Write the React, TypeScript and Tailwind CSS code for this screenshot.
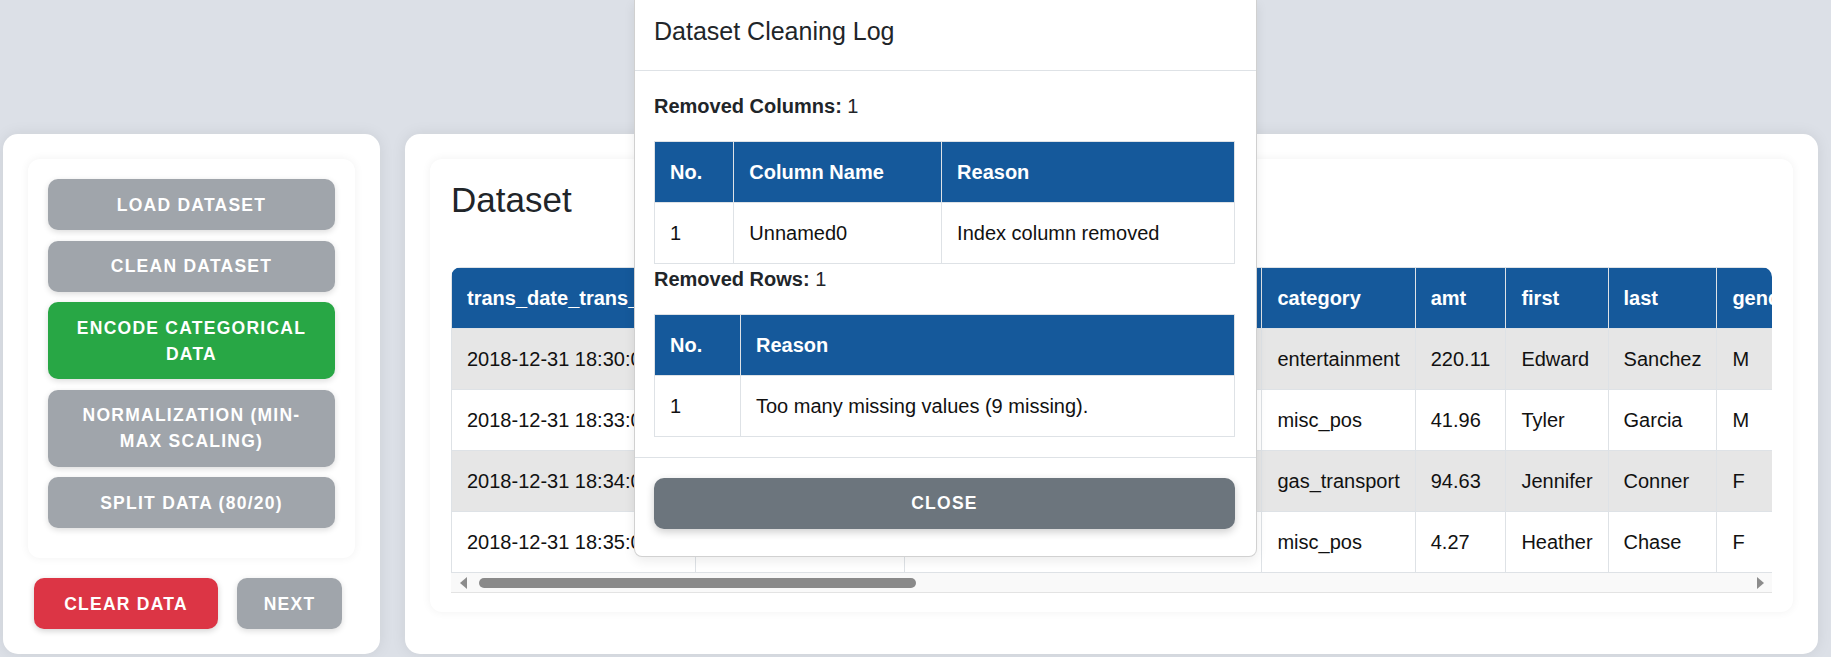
import React from "react";

const rows = [
  { t: "2018-12-31 18:30:00", cc: "3560725013359375", m: "fraud_Hamill-D'Amore", c: "entertainment", a: "220.11", f: "Edward", l: "Sanchez", g: "M", s: "594 White Dale Suite 530", ci: "Malad City" },
  { t: "2018-12-31 18:33:00", cc: "6011360759745864", m: "fraud_Kuhn LLC", c: "misc_pos", a: "41.96", f: "Tyler", l: "Garcia", g: "M", s: "408 Bradley Rest", ci: "Doe Hill" },
  { t: "2018-12-31 18:34:00", cc: "4060579726528237", m: "fraud_Kutch, Hermiston and Farrell", c: "gas_transport", a: "94.63", f: "Jennifer", l: "Conner", g: "F", s: "4016 Lewis Loaf", ci: "Bradley" },
  { t: "2018-12-31 18:35:00", cc: "4292743669224718", m: "fraud_Kris-Padberg", c: "misc_pos", a: "4.27", f: "Heather", l: "Chase", g: "F", s: "6888 Hicks Stream", ci: "Farmington" },
];

function SideButton({ children, bg }: { children: React.ReactNode; bg: string }) {
  return (
    <button
      className={
        "w-full rounded-[10px] px-[20px] py-[12.5px] text-center text-[17.5px] font-bold uppercase leading-[26px] tracking-[1.25px] text-white shadow-[0_2px_6px_rgba(0,0,0,0.14)] " +
        bg
      }
    >
      {children}
    </button>
  );
}

const th = "border border-[#dee2e6] px-[15px] py-[15px] text-left font-bold leading-[30px] text-white";
const td = "border border-[#dee2e6] px-[15px] py-[15px] leading-[30px]";

export default function App() {
  return (
    <div className="relative h-[657px] w-[1831px] overflow-hidden bg-[#dce0e7] font-['Liberation_Sans',Arial,sans-serif] text-[#212529]">
      <div className="flex items-stretch gap-[25px] pb-[3px] pl-[3px] pr-[13px] pt-[134px]">
        {/* Left panel */}
        <aside className="w-[377px] shrink-0 rounded-[15px] bg-white p-[25px] shadow-[0_0_15px_rgba(0,0,0,0.08)]">
          <div className="flex flex-col gap-[10.5px] rounded-[12px] bg-white px-[20px] pb-[30px] pt-[20px] shadow-[0_0_10px_rgba(0,0,0,0.06)]">
            <SideButton bg="bg-[#a0a5ab]">Load Dataset</SideButton>
            <SideButton bg="bg-[#a0a5ab]">Clean Dataset</SideButton>
            <SideButton bg="bg-[#28a745]">Encode Categorical Data</SideButton>
            <SideButton bg="bg-[#a0a5ab]">Normalization (Min-Max Scaling)</SideButton>
            <SideButton bg="bg-[#a0a5ab]">Split Data (80/20)</SideButton>
          </div>
          <div className="mt-[20px] flex gap-[19px] pl-[6px]">
            <button className="w-[184px] rounded-[10px] bg-[#dc3545] py-[12.5px] text-center text-[17.5px] font-bold uppercase leading-[26px] tracking-[1.25px] text-white shadow-[0_2px_6px_rgba(0,0,0,0.18)]">
              Clear Data
            </button>
            <button className="w-[105px] rounded-[10px] bg-[#a0a5ab] py-[12.5px] text-center text-[17.5px] font-bold uppercase leading-[26px] tracking-[1.25px] text-white shadow-[0_2px_6px_rgba(0,0,0,0.14)]">
              Next
            </button>
          </div>
        </aside>

        {/* Main panel */}
        <main className="min-w-0 flex-1 rounded-[15px] bg-white p-[25px] shadow-[0_0_15px_rgba(0,0,0,0.08)]">
          <div className="rounded-[12px] bg-white px-[21px] pb-[19px] pt-[20px] shadow-[0_0_10px_rgba(0,0,0,0.06)]">
            <h2 className="mb-[46px] text-[35px] font-normal leading-[42px] text-[#212529]">Dataset</h2>
            <div className="overflow-hidden rounded-t-[10px]">
              <div className="overflow-hidden">
                <table className="w-max border-collapse whitespace-nowrap text-[20px] text-[#111]">
                  <thead>
                    <tr className="bg-[#15599b]">
                      <th className={th}>trans_date_trans_time</th>
                      <th className={th}>cc_num</th>
                      <th className={th}>
                        <div className="min-w-[326px]">merchant</div>
                      </th>
                      <th className={th}>category</th>
                      <th className={th}>amt</th>
                      <th className={th}>first</th>
                      <th className={th}>last</th>
                      <th className={th}>gender</th>
                      <th className={th}>street</th>
                      <th className={th}>city</th>
                    </tr>
                  </thead>
                  <tbody>
                    {rows.map((r, i) => (
                      <tr key={i} className={i % 2 === 0 ? "bg-[#e6e6e6]" : "bg-white"}>
                        <td className={td}>{r.t}</td>
                        <td className={td}>{r.cc}</td>
                        <td className={td}>{r.m}</td>
                        <td className={td}>{r.c}</td>
                        <td className={td}>{r.a}</td>
                        <td className={td}>{r.f}</td>
                        <td className={td}>{r.l}</td>
                        <td className={td}>{r.g}</td>
                        <td className={td}>{r.s}</td>
                        <td className={td}>{r.ci}</td>
                      </tr>
                    ))}
                  </tbody>
                </table>
              </div>
              {/* horizontal scrollbar */}
              <div className="flex h-[20px] items-center border-b border-[#e3e3e3] bg-[#f9f9f9]">
                <div className="ml-[9px] h-0 w-0 border-y-[6px] border-r-[7px] border-y-transparent border-r-[#8c8c8c]" />
                <div className="ml-[12px] h-[10px] w-[437px] rounded-full bg-[#8a8a8a]" />
                <div className="flex-1" />
                <div className="mr-[8px] h-0 w-0 border-y-[6px] border-l-[7px] border-y-transparent border-l-[#8c8c8c]" />
              </div>
            </div>
          </div>
        </main>
      </div>

      {/* Modal */}
      <div className="absolute left-[634px] top-0 w-[623px] rounded-b-[8px] border border-t-0 border-[rgba(0,0,0,0.18)] bg-white shadow-[0_4px_12px_rgba(0,0,0,0.08)]">
        <div className="border-b border-[#dee2e6] px-[19px] pb-[19.5px] pt-[12.5px]">
          <h5 className="text-[25px] font-normal leading-[37.5px] text-[#212529]">Dataset Cleaning Log</h5>
        </div>
        <div className="pb-[20px] pl-[19px] pr-[21px] pt-[20px] text-[20px]">
          <p className="mb-[20px] leading-[30px]">
            <strong>Removed Columns:</strong> 1
          </p>
          <table className="w-full border-collapse text-[#111]">
            <thead>
              <tr className="bg-[#15599b]">
                <th className={th}>No.</th>
                <th className={th}>Column Name</th>
                <th className={th}>Reason</th>
              </tr>
            </thead>
            <tbody>
              <tr>
                <td className={td}>1</td>
                <td className={td}>Unnamed0</td>
                <td className={td}>Index column removed</td>
              </tr>
            </tbody>
          </table>
          <p className="mb-[20px] leading-[30px]">
            <strong>Removed Rows:</strong> 1
          </p>
          <table className="w-full border-collapse text-[#111]">
            <thead>
              <tr className="bg-[#15599b]">
                <th className={th}>No.</th>
                <th className={th}>Reason</th>
              </tr>
            </thead>
            <tbody>
              <tr>
                <td className={td}>1</td>
                <td className={td}>Too many missing values (9 missing).</td>
              </tr>
            </tbody>
          </table>
        </div>
        <div className="border-t border-[#dee2e6] pb-[27px] pl-[19px] pr-[21px] pt-[20px]">
          <button className="w-full rounded-[10px] bg-[#6c757d] py-[12.5px] text-center text-[17.5px] font-bold uppercase leading-[26px] tracking-[1.25px] text-white shadow-[0_3px_8px_rgba(0,0,0,0.2)]">
            Close
          </button>
        </div>
      </div>
    </div>
  );
}
